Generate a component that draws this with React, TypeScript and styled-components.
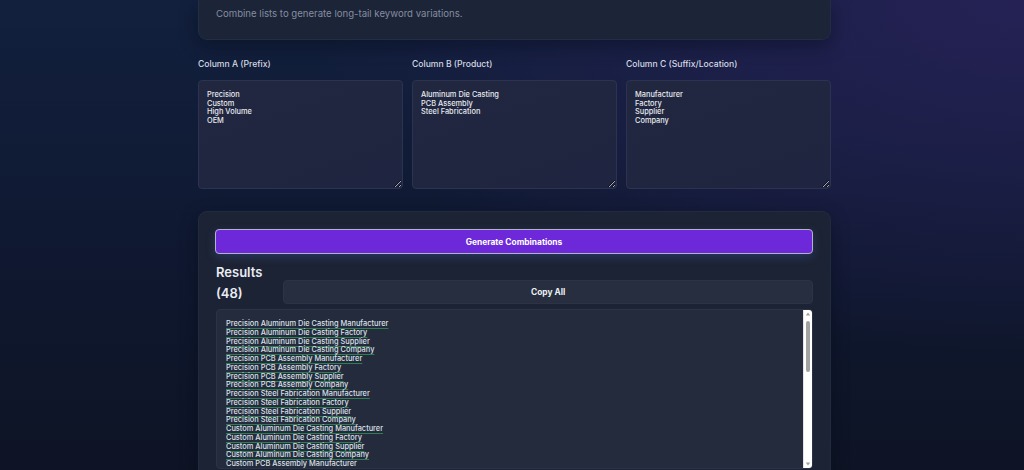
import React from "react";
import styled, { createGlobalStyle } from "styled-components";

const GlobalStyle = createGlobalStyle`
  html, body { margin: 0; padding: 0; }
  body {
    min-height: 470px;
    overflow: hidden;
    font-family: Inter, "Noto Sans", "Liberation Sans", sans-serif;
    background:
      radial-gradient(ellipse 70% 75% at 100% 0%, rgba(38, 33, 86, 0.95), rgba(38, 33, 86, 0) 100%),
      linear-gradient(180deg, #12203e 0%, #0f1830 55%, #0e1425 100%);
    background-attachment: fixed;
    color: #e5e7eb;
  }
`;

const Page = styled.div`
  width: 633px;
  margin-left: calc(50% - 314px);
  display: flex;
  flex-direction: column;
`;

const IntroCard = styled.div`
  background: #1c2437;
  border: 1px solid #232c42;
  border-top: none;
  border-radius: 0 0 9px 9px;
  padding: 7px 17px 18px;
  box-shadow: 0 6px 18px rgba(5, 10, 25, 0.45);
`;

const Subtitle = styled.p`
  margin: 0;
  font-size: 9.6px;
  line-height: 14px;
  color: #858da0;
`;

const ColumnsGrid = styled.div`
  margin-top: 18px;
  display: grid;
  grid-template-columns: repeat(3, 1fr);
  gap: 9px;
`;

const Column = styled.div`
  display: flex;
  flex-direction: column;
`;

const Label = styled.label`
  font-size: 8.6px;
  line-height: 12px;
  font-weight: 500;
  color: #d6d9e2;
  margin-bottom: 10px;
`;

const ListInput = styled.textarea`
  box-sizing: border-box;
  height: 109px;
  width: 100%;
  margin: 0;
  padding: 10px 8px 8px;
  font-family: Inter, "Noto Sans", "Liberation Sans", sans-serif;
  font-size: 7.4px;
  font-weight: 500;
  line-height: 8.7px;
  color: #e8eaf0;
  background: linear-gradient(160deg, #21273f 0%, #1f2540 100%);
  border: 1px solid #2c3350;
  border-radius: 4px;
  outline: none;
  resize: vertical;
`;

const ResultsCard = styled.div`
  margin-top: 22px;
  background: #1c2334;
  border: 1px solid #222a3e;
  border-radius: 9px;
  padding: 17px 17px 40px 16px;
  box-shadow: 0 6px 18px rgba(5, 10, 25, 0.45);
  display: flex;
  flex-direction: column;
`;

const GenerateButton = styled.button`
  height: 25px;
  width: 100%;
  margin: 0;
  background: #6d28d9;
  border: 1px solid #b4b3c4;
  border-radius: 4px;
  color: #ffffff;
  font-family: Inter, "Noto Sans", "Liberation Sans", sans-serif;
  font-size: 8.4px;
  font-weight: 700;
  box-shadow: 0 3px 10px rgba(70, 110, 200, 0.28);
  cursor: pointer;
`;

const ResultsHeader = styled.div`
  margin-top: 8px;
  padding-left: 1px;
  display: flex;
  align-items: flex-end;
  gap: 21px;
`;

const ResultsTitle = styled.h2`
  margin: 0;
  width: min-content;
  flex: 0 0 auto;
  font-size: 13px;
  line-height: 21px;
  font-weight: 600;
  color: #e9ecf2;
`;

const CopyButton = styled.button`
  flex: 1 1 auto;
  height: 24px;
  margin: 0;
  background: #262e3f;
  border: 1px solid #2b3345;
  border-radius: 4px;
  color: #eef0f4;
  font-family: Inter, "Noto Sans", "Liberation Sans", sans-serif;
  font-size: 8.4px;
  font-weight: 700;
  cursor: pointer;
`;

const ResultsFrame = styled.div`
  position: relative;
  margin: 5px 0 0 1px;
  box-sizing: border-box;
  height: 160px;
  background: #232b3c;
  border: 1px solid #2b3347;
  border-radius: 4px;
  overflow: hidden;
`;

const ResultsList = styled.div`
  height: 100%;
  box-sizing: border-box;
  padding: 10px 9px 9px;
  overflow: hidden;
  font-size: 7.4px;
  font-weight: 500;
  line-height: 8.75px;
  color: #dde1e9;
`;

const ResultLine = styled.div`
  white-space: nowrap;
`;

const Marked = styled.span`
  text-decoration: underline;
  text-decoration-color: #2f7d52;
  text-decoration-thickness: 1px;
  text-underline-offset: 1.6px;
`;

/* drawn scrollbar lying over the right edge of the results list */
const ScrollTrack = styled.div`
  position: absolute;
  top: 0;
  right: 0;
  bottom: 0;
  width: 8px;
  background: #ffffff;
  border-left: 1px solid #e4e4e4;
  display: flex;
  flex-direction: column;
  align-items: center;
`;

const ScrollArrow = styled.svg`
  flex: 0 0 auto;
  width: 8px;
  height: 9px;
`;

const ScrollThumb = styled.div`
  width: 4px;
  height: 51px;
  margin-top: 2px;
  background: #a2a2a2;
  border-radius: 2px;
`;

const ScrollSpacer = styled.div`
  flex: 1 1 auto;
`;

const prefixes = ["Precision", "Custom", "High Volume", "OEM"];
const products = ["Aluminum Die Casting", "PCB Assembly", "Steel Fabrication"];
const suffixes = ["Manufacturer", "Factory", "Supplier", "Company"];

const combos: string[] = [];
prefixes.forEach((p) =>
  products.forEach((pr) => suffixes.forEach((s) => combos.push(`${p} ${pr} ${s}`)))
);

export default function App() {
  return (
    <>
      <GlobalStyle />
      <Page>
        <IntroCard>
          <Subtitle>Combine lists to generate long-tail keyword variations.</Subtitle>
        </IntroCard>

        <ColumnsGrid>
          <Column>
            <Label>Column A (Prefix)</Label>
            <ListInput spellCheck={false} defaultValue={prefixes.join("\n")} />
          </Column>
          <Column>
            <Label>Column B (Product)</Label>
            <ListInput spellCheck={false} defaultValue={products.join("\n")} />
          </Column>
          <Column>
            <Label>Column C (Suffix/Location)</Label>
            <ListInput spellCheck={false} defaultValue={suffixes.join("\n")} />
          </Column>
        </ColumnsGrid>

        <ResultsCard>
          <GenerateButton>Generate Combinations</GenerateButton>
          <ResultsHeader>
            <ResultsTitle>Results ({combos.length})</ResultsTitle>
            <CopyButton>Copy All</CopyButton>
          </ResultsHeader>
          <ResultsFrame>
            <ResultsList>
              {combos.map((c) => (
                <ResultLine key={c}>
                  <Marked>{c}</Marked>
                </ResultLine>
              ))}
            </ResultsList>
            <ScrollTrack>
              <ScrollArrow viewBox="0 0 8 9">
                <path d="M4 2.5 L6.2 5.5 L1.8 5.5 Z" fill="#a0a0a0" />
              </ScrollArrow>
              <ScrollThumb />
              <ScrollSpacer />
              <ScrollArrow viewBox="0 0 8 9">
                <path d="M1.8 3.5 L6.2 3.5 L4 6.5 Z" fill="#a0a0a0" />
              </ScrollArrow>
            </ScrollTrack>
          </ResultsFrame>
        </ResultsCard>
      </Page>
    </>
  );
}
